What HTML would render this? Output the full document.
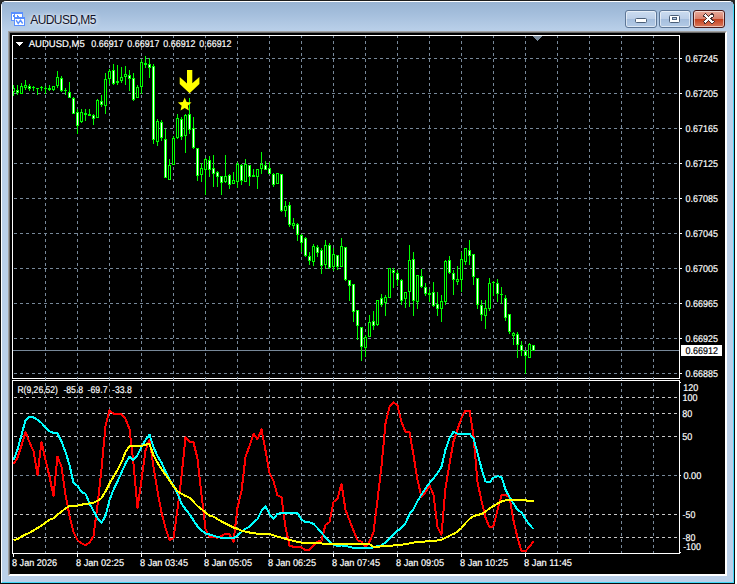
<!DOCTYPE html>
<html><head><meta charset="utf-8"><title>AUDUSD,M5</title>
<style>
html,body{margin:0;padding:0;background:#fff;}
body{width:737px;height:584px;overflow:hidden;position:relative;font-family:'Liberation Sans', sans-serif;}
#win{position:absolute;left:0;top:0;width:735px;height:584px;box-sizing:border-box;background:#bad0e9;border:1px solid #0c0c0c;border-top-color:#1c1c1c;border-radius:6px 6px 0 0;overflow:hidden;}
#hl{position:absolute;left:0;top:0;right:0;bottom:0;border:1px solid #fff;border-right-color:#40d8f8;border-bottom-color:#40d8f8;border-radius:5px 5px 0 0;}
#cap{position:absolute;left:1px;top:1px;right:1px;height:29px;background:linear-gradient(#99b4d3,#a4bedc 40%,#bad0e9);}
#title{position:absolute;left:29.2px;top:11px;font-size:12px;line-height:16px;color:#12122a;white-space:nowrap;text-shadow:0 0 6px #fff,0 0 3px rgba(255,255,255,.8);letter-spacing:-0.55px;}
.btn{position:absolute;top:9px;height:18px;width:32px;box-sizing:border-box;border:1px solid #5d7696;border-radius:3px;box-shadow:inset 0 0 0 1px rgba(255,255,255,.55);background:linear-gradient(#cbdcf0 0,#bccfe8 48%,#a5bedd 52%,#b4cbe6 100%);}
#bclose{border-color:#4a1a1a;background:linear-gradient(#e8ab9c 0,#d9816c 48%,#c4401f 52%,#d87a5e 100%);}
#client{position:absolute;left:7px;top:30px;width:719px;height:545px;box-sizing:border-box;background:#000;border-left:1px solid #a0a0a0;border-top:1px solid #a0a0a0;border-right:1px solid #fff;border-bottom:1px solid #fff;}
#client2{position:absolute;left:0;top:0;right:0;bottom:0;border-left:1px solid #696969;border-top:1px solid #696969;border-right:1px solid #fff;border-bottom:1px solid #fff;}
svg{position:absolute;left:0;top:0;}
svg rect,svg line,svg polygon,svg polyline{shape-rendering:crispEdges;}
svg text{font-family:'Liberation Sans', sans-serif;text-rendering:geometricPrecision;}
</style></head><body>
<div style="position:absolute;left:0;top:0;width:735px;height:12px;background:#2a2a2a"></div>
<div id="win"><div id="hl"></div><div id="cap"></div>
<div id="title">AUDUSD,M5</div>
<div class="btn" style="left:624px"></div>
<div class="btn" style="left:658px"></div>
<div class="btn" id="bclose" style="left:692px;width:32px"></div>
<div id="client"><div id="client2"></div></div>
</div>
<svg width="737" height="584" viewBox="0 0 737 584">
<!-- icon -->
<g shape-rendering="crispEdges">
<rect x="11.5" y="12.5" width="11" height="8" fill="#fff" stroke="#5a90ff"/>
<rect x="11" y="12" width="12" height="2" fill="#5a90ff"/>
</g>
<g fill="none" stroke="#5a90ff" stroke-width="1.5" style="shape-rendering:auto">
<polyline points="13,16.3 14.2,15.4 14.8,16.6"/>
<polyline points="17,15.2 18.8,17"/>
</g>
<g shape-rendering="crispEdges">
<rect x="14.5" y="17.5" width="10" height="8" fill="#fff" stroke="#5a90ff"/>
<rect x="14" y="17" width="11" height="2" fill="#5a90ff"/>
</g>
<polyline points="16.1,20.1 18.2,23.5 20.5,20.3 22.7,23.5" fill="none" stroke="#5a90ff" stroke-width="1.4" style="shape-rendering:auto"/>
<!-- caption glyphs -->
<rect x="635.5" y="18.5" width="11" height="4" rx="1" fill="#fff" stroke="#4b5f78" style="shape-rendering:auto"/>
<rect x="669.5" y="15.5" width="10" height="7" rx="1" fill="#fff" stroke="#4b5f78" style="shape-rendering:auto"/>
<rect x="672.5" y="17.5" width="4" height="2" fill="#b4cbe6" stroke="#4b5f78" style="shape-rendering:auto"/>
<g style="shape-rendering:auto" fill="none" stroke-linecap="square">
<line x1="705.3" y1="15.6" x2="712" y2="21.6" stroke="#4a3030" stroke-width="3.8"/>
<line x1="712" y1="15.6" x2="705.3" y2="21.6" stroke="#4a3030" stroke-width="3.8"/>
<line x1="705.3" y1="15.6" x2="712" y2="21.6" stroke="#fff" stroke-width="2.2"/>
<line x1="712" y1="15.6" x2="705.3" y2="21.6" stroke="#fff" stroke-width="2.2"/>
</g>
<defs><clipPath id="c0"><rect x="13" y="36" width="666" height="342"/></clipPath><clipPath id="c2"><rect x="13" y="36" width="666" height="517"/></clipPath><clipPath id="c1"><rect x="13" y="381" width="666" height="172"/></clipPath></defs>
<rect x="12" y="35" width="668" height="1" fill="#fff"/>
<rect x="12" y="35" width="1" height="344" fill="#fff"/>
<rect x="679" y="35" width="1" height="344" fill="#fff"/>
<rect x="12" y="378" width="668" height="1" fill="#fff"/>
<rect x="12" y="380" width="668" height="1" fill="#fff"/>
<rect x="12" y="380" width="1" height="174" fill="#fff"/>
<rect x="679" y="380" width="1" height="174" fill="#fff"/>
<rect x="12" y="553" width="668" height="1" fill="#fff"/>
<line x1="8" y1="58.5" x2="679" y2="58.5" stroke="#778899" stroke-width="1" stroke-dasharray="3 3" clip-path="url(#c0)"/>
<line x1="8" y1="93.5" x2="679" y2="93.5" stroke="#778899" stroke-width="1" stroke-dasharray="3 3" clip-path="url(#c0)"/>
<line x1="8" y1="128.5" x2="679" y2="128.5" stroke="#778899" stroke-width="1" stroke-dasharray="3 3" clip-path="url(#c0)"/>
<line x1="8" y1="163.5" x2="679" y2="163.5" stroke="#778899" stroke-width="1" stroke-dasharray="3 3" clip-path="url(#c0)"/>
<line x1="8" y1="198.5" x2="679" y2="198.5" stroke="#778899" stroke-width="1" stroke-dasharray="3 3" clip-path="url(#c0)"/>
<line x1="8" y1="233.5" x2="679" y2="233.5" stroke="#778899" stroke-width="1" stroke-dasharray="3 3" clip-path="url(#c0)"/>
<line x1="8" y1="268.5" x2="679" y2="268.5" stroke="#778899" stroke-width="1" stroke-dasharray="3 3" clip-path="url(#c0)"/>
<line x1="8" y1="303.5" x2="679" y2="303.5" stroke="#778899" stroke-width="1" stroke-dasharray="3 3" clip-path="url(#c0)"/>
<line x1="8" y1="338.5" x2="679" y2="338.5" stroke="#778899" stroke-width="1" stroke-dasharray="3 3" clip-path="url(#c0)"/>
<line x1="8" y1="373.5" x2="679" y2="373.5" stroke="#778899" stroke-width="1" stroke-dasharray="3 3" clip-path="url(#c0)"/>
<line x1="45.5" y1="35" x2="45.5" y2="553" stroke="#778899" stroke-width="1" stroke-dasharray="3 3" clip-path="url(#c2)"/>
<line x1="77.5" y1="35" x2="77.5" y2="553" stroke="#778899" stroke-width="1" stroke-dasharray="3 3" clip-path="url(#c2)"/>
<line x1="109.5" y1="35" x2="109.5" y2="553" stroke="#778899" stroke-width="1" stroke-dasharray="3 3" clip-path="url(#c2)"/>
<line x1="141.5" y1="35" x2="141.5" y2="553" stroke="#778899" stroke-width="1" stroke-dasharray="3 3" clip-path="url(#c2)"/>
<line x1="173.5" y1="35" x2="173.5" y2="553" stroke="#778899" stroke-width="1" stroke-dasharray="3 3" clip-path="url(#c2)"/>
<line x1="205.5" y1="35" x2="205.5" y2="553" stroke="#778899" stroke-width="1" stroke-dasharray="3 3" clip-path="url(#c2)"/>
<line x1="237.5" y1="35" x2="237.5" y2="553" stroke="#778899" stroke-width="1" stroke-dasharray="3 3" clip-path="url(#c2)"/>
<line x1="269.5" y1="35" x2="269.5" y2="553" stroke="#778899" stroke-width="1" stroke-dasharray="3 3" clip-path="url(#c2)"/>
<line x1="301.5" y1="35" x2="301.5" y2="553" stroke="#778899" stroke-width="1" stroke-dasharray="3 3" clip-path="url(#c2)"/>
<line x1="333.5" y1="35" x2="333.5" y2="553" stroke="#778899" stroke-width="1" stroke-dasharray="3 3" clip-path="url(#c2)"/>
<line x1="365.5" y1="35" x2="365.5" y2="553" stroke="#778899" stroke-width="1" stroke-dasharray="3 3" clip-path="url(#c2)"/>
<line x1="397.5" y1="35" x2="397.5" y2="553" stroke="#778899" stroke-width="1" stroke-dasharray="3 3" clip-path="url(#c2)"/>
<line x1="429.5" y1="35" x2="429.5" y2="553" stroke="#778899" stroke-width="1" stroke-dasharray="3 3" clip-path="url(#c2)"/>
<line x1="461.5" y1="35" x2="461.5" y2="553" stroke="#778899" stroke-width="1" stroke-dasharray="3 3" clip-path="url(#c2)"/>
<line x1="493.5" y1="35" x2="493.5" y2="553" stroke="#778899" stroke-width="1" stroke-dasharray="3 3" clip-path="url(#c2)"/>
<line x1="525.5" y1="35" x2="525.5" y2="553" stroke="#778899" stroke-width="1" stroke-dasharray="3 3" clip-path="url(#c2)"/>
<line x1="557.5" y1="35" x2="557.5" y2="553" stroke="#778899" stroke-width="1" stroke-dasharray="3 3" clip-path="url(#c2)"/>
<line x1="589.5" y1="35" x2="589.5" y2="553" stroke="#778899" stroke-width="1" stroke-dasharray="3 3" clip-path="url(#c2)"/>
<line x1="621.5" y1="35" x2="621.5" y2="553" stroke="#778899" stroke-width="1" stroke-dasharray="3 3" clip-path="url(#c2)"/>
<line x1="653.5" y1="35" x2="653.5" y2="553" stroke="#778899" stroke-width="1" stroke-dasharray="3 3" clip-path="url(#c2)"/>
<line x1="8" y1="397.5" x2="679" y2="397.5" stroke="#c8c8c8" stroke-width="1" stroke-dasharray="3 3" clip-path="url(#c1)"/>
<line x1="8" y1="413.5" x2="679" y2="413.5" stroke="#c8c8c8" stroke-width="1" stroke-dasharray="3 3" clip-path="url(#c1)"/>
<line x1="8" y1="436.5" x2="679" y2="436.5" stroke="#c8c8c8" stroke-width="1" stroke-dasharray="3 3" clip-path="url(#c1)"/>
<line x1="8" y1="514.5" x2="679" y2="514.5" stroke="#c8c8c8" stroke-width="1" stroke-dasharray="3 3" clip-path="url(#c1)"/>
<line x1="8" y1="537.5" x2="679" y2="537.5" stroke="#c8c8c8" stroke-width="1" stroke-dasharray="3 3" clip-path="url(#c1)"/>
<line x1="8" y1="475.5" x2="679" y2="475.5" stroke="#778899" stroke-width="1" stroke-dasharray="3 3" clip-path="url(#c1)"/>
<rect x="533" y="36" width="9" height="1" fill="#778899"/>
<rect x="534" y="37" width="7" height="1" fill="#778899"/>
<rect x="535" y="38" width="5" height="1" fill="#778899"/>
<rect x="536" y="39" width="3" height="1" fill="#778899"/>
<rect x="537" y="40" width="1" height="1" fill="#778899"/>
<rect x="13" y="350" width="666" height="1" fill="#778899"/>
<rect x="13" y="85" width="1" height="11" fill="#00ff00"/>
<rect x="13" y="88" width="2" height="4" fill="#00ff00"/>
<rect x="13" y="89" width="1" height="2" fill="#000"/>
<rect x="17" y="85" width="1" height="10" fill="#00ff00"/>
<rect x="16" y="90" width="3" height="3" fill="#00ff00"/>
<rect x="17" y="91" width="1" height="1" fill="#fff"/>
<rect x="21" y="83" width="1" height="11" fill="#00ff00"/>
<rect x="20" y="86" width="3" height="8" fill="#00ff00"/>
<rect x="21" y="87" width="1" height="6" fill="#000"/>
<rect x="25" y="80" width="1" height="10" fill="#00ff00"/>
<rect x="24" y="85" width="3" height="3" fill="#00ff00"/>
<rect x="25" y="86" width="1" height="1" fill="#000"/>
<rect x="29" y="84" width="1" height="7" fill="#00ff00"/>
<rect x="28" y="86" width="3" height="3" fill="#00ff00"/>
<rect x="29" y="87" width="1" height="1" fill="#fff"/>
<rect x="33" y="86" width="1" height="5" fill="#00ff00"/>
<rect x="32" y="87" width="3" height="1" fill="#00ff00"/>
<rect x="37" y="88" width="1" height="7" fill="#00ff00"/>
<rect x="36" y="88" width="3" height="1" fill="#00ff00"/>
<rect x="41" y="86" width="1" height="5" fill="#00ff00"/>
<rect x="40" y="87" width="3" height="1" fill="#00ff00"/>
<rect x="45" y="86" width="1" height="8" fill="#00ff00"/>
<rect x="44" y="88" width="3" height="1" fill="#00ff00"/>
<rect x="49" y="85" width="1" height="6" fill="#00ff00"/>
<rect x="48" y="88" width="3" height="2" fill="#00ff00"/>
<rect x="53" y="86" width="1" height="5" fill="#00ff00"/>
<rect x="52" y="86" width="3" height="4" fill="#00ff00"/>
<rect x="53" y="87" width="1" height="2" fill="#000"/>
<rect x="57" y="71" width="1" height="17" fill="#00ff00"/>
<rect x="56" y="77" width="3" height="9" fill="#00ff00"/>
<rect x="57" y="78" width="1" height="7" fill="#000"/>
<rect x="61" y="76" width="1" height="16" fill="#00ff00"/>
<rect x="60" y="78" width="3" height="13" fill="#00ff00"/>
<rect x="61" y="79" width="1" height="11" fill="#fff"/>
<rect x="65" y="88" width="1" height="7" fill="#00ff00"/>
<rect x="64" y="90" width="3" height="1" fill="#00ff00"/>
<rect x="69" y="82" width="1" height="16" fill="#00ff00"/>
<rect x="68" y="92" width="3" height="6" fill="#00ff00"/>
<rect x="69" y="93" width="1" height="4" fill="#fff"/>
<rect x="73" y="97" width="1" height="17" fill="#00ff00"/>
<rect x="72" y="98" width="3" height="16" fill="#00ff00"/>
<rect x="73" y="99" width="1" height="14" fill="#fff"/>
<rect x="77" y="109" width="1" height="25" fill="#00ff00"/>
<rect x="76" y="112" width="3" height="14" fill="#00ff00"/>
<rect x="77" y="113" width="1" height="12" fill="#fff"/>
<rect x="81" y="109" width="1" height="14" fill="#00ff00"/>
<rect x="80" y="112" width="3" height="10" fill="#00ff00"/>
<rect x="81" y="113" width="1" height="8" fill="#000"/>
<rect x="85" y="109" width="1" height="12" fill="#00ff00"/>
<rect x="84" y="113" width="3" height="2" fill="#00ff00"/>
<rect x="89" y="109" width="1" height="7" fill="#00ff00"/>
<rect x="88" y="114" width="3" height="2" fill="#00ff00"/>
<rect x="93" y="114" width="1" height="11" fill="#00ff00"/>
<rect x="92" y="115" width="3" height="4" fill="#00ff00"/>
<rect x="93" y="116" width="1" height="2" fill="#fff"/>
<rect x="97" y="99" width="1" height="19" fill="#00ff00"/>
<rect x="96" y="100" width="3" height="18" fill="#00ff00"/>
<rect x="97" y="101" width="1" height="16" fill="#000"/>
<rect x="101" y="95" width="1" height="12" fill="#00ff00"/>
<rect x="100" y="101" width="3" height="4" fill="#00ff00"/>
<rect x="101" y="102" width="1" height="2" fill="#fff"/>
<rect x="105" y="73" width="1" height="41" fill="#00ff00"/>
<rect x="104" y="79" width="3" height="27" fill="#00ff00"/>
<rect x="105" y="80" width="1" height="25" fill="#000"/>
<rect x="109" y="69" width="1" height="15" fill="#00ff00"/>
<rect x="108" y="71" width="3" height="8" fill="#00ff00"/>
<rect x="109" y="72" width="1" height="6" fill="#000"/>
<rect x="113" y="64" width="1" height="21" fill="#00ff00"/>
<rect x="112" y="70" width="3" height="14" fill="#00ff00"/>
<rect x="113" y="71" width="1" height="12" fill="#fff"/>
<rect x="117" y="65" width="1" height="20" fill="#00ff00"/>
<rect x="116" y="81" width="3" height="2" fill="#00ff00"/>
<rect x="121" y="67" width="1" height="16" fill="#00ff00"/>
<rect x="120" y="77" width="3" height="4" fill="#00ff00"/>
<rect x="121" y="78" width="1" height="2" fill="#000"/>
<rect x="125" y="66" width="1" height="19" fill="#00ff00"/>
<rect x="124" y="74" width="3" height="3" fill="#00ff00"/>
<rect x="125" y="75" width="1" height="1" fill="#000"/>
<rect x="129" y="70" width="1" height="21" fill="#00ff00"/>
<rect x="128" y="75" width="3" height="4" fill="#00ff00"/>
<rect x="129" y="76" width="1" height="2" fill="#fff"/>
<rect x="133" y="73" width="1" height="28" fill="#00ff00"/>
<rect x="132" y="78" width="3" height="22" fill="#00ff00"/>
<rect x="133" y="79" width="1" height="20" fill="#fff"/>
<rect x="137" y="85" width="1" height="13" fill="#00ff00"/>
<rect x="136" y="87" width="3" height="11" fill="#00ff00"/>
<rect x="137" y="88" width="1" height="9" fill="#000"/>
<rect x="141" y="59" width="1" height="35" fill="#00ff00"/>
<rect x="140" y="62" width="3" height="25" fill="#00ff00"/>
<rect x="141" y="63" width="1" height="23" fill="#000"/>
<rect x="145" y="56" width="1" height="12" fill="#00ff00"/>
<rect x="144" y="63" width="3" height="2" fill="#00ff00"/>
<rect x="149" y="58" width="1" height="20" fill="#00ff00"/>
<rect x="148" y="64" width="3" height="4" fill="#00ff00"/>
<rect x="149" y="65" width="1" height="2" fill="#fff"/>
<rect x="153" y="64" width="1" height="80" fill="#00ff00"/>
<rect x="152" y="66" width="3" height="74" fill="#00ff00"/>
<rect x="153" y="67" width="1" height="72" fill="#fff"/>
<rect x="157" y="119" width="1" height="27" fill="#00ff00"/>
<rect x="156" y="121" width="3" height="21" fill="#00ff00"/>
<rect x="157" y="122" width="1" height="19" fill="#000"/>
<rect x="161" y="120" width="1" height="21" fill="#00ff00"/>
<rect x="160" y="122" width="3" height="16" fill="#00ff00"/>
<rect x="161" y="123" width="1" height="14" fill="#fff"/>
<rect x="165" y="129" width="1" height="49" fill="#00ff00"/>
<rect x="164" y="139" width="3" height="39" fill="#00ff00"/>
<rect x="165" y="140" width="1" height="37" fill="#fff"/>
<rect x="169" y="159" width="1" height="21" fill="#00ff00"/>
<rect x="168" y="165" width="3" height="15" fill="#00ff00"/>
<rect x="169" y="166" width="1" height="13" fill="#000"/>
<rect x="173" y="136" width="1" height="29" fill="#00ff00"/>
<rect x="172" y="138" width="3" height="27" fill="#00ff00"/>
<rect x="173" y="139" width="1" height="25" fill="#000"/>
<rect x="177" y="114" width="1" height="25" fill="#00ff00"/>
<rect x="176" y="118" width="3" height="20" fill="#00ff00"/>
<rect x="177" y="119" width="1" height="18" fill="#000"/>
<rect x="181" y="117" width="1" height="23" fill="#00ff00"/>
<rect x="180" y="119" width="3" height="18" fill="#00ff00"/>
<rect x="181" y="120" width="1" height="16" fill="#fff"/>
<rect x="185" y="114" width="1" height="39" fill="#00ff00"/>
<rect x="184" y="115" width="3" height="21" fill="#00ff00"/>
<rect x="185" y="116" width="1" height="19" fill="#000"/>
<rect x="189" y="98" width="1" height="36" fill="#00ff00"/>
<rect x="188" y="114" width="3" height="16" fill="#00ff00"/>
<rect x="189" y="115" width="1" height="14" fill="#fff"/>
<rect x="193" y="117" width="1" height="32" fill="#00ff00"/>
<rect x="192" y="128" width="3" height="20" fill="#00ff00"/>
<rect x="193" y="129" width="1" height="18" fill="#fff"/>
<rect x="197" y="148" width="1" height="33" fill="#00ff00"/>
<rect x="196" y="148" width="3" height="28" fill="#00ff00"/>
<rect x="197" y="149" width="1" height="26" fill="#fff"/>
<rect x="201" y="163" width="1" height="19" fill="#00ff00"/>
<rect x="200" y="168" width="3" height="7" fill="#00ff00"/>
<rect x="201" y="169" width="1" height="5" fill="#000"/>
<rect x="205" y="158" width="1" height="37" fill="#00ff00"/>
<rect x="204" y="159" width="3" height="11" fill="#00ff00"/>
<rect x="205" y="160" width="1" height="9" fill="#000"/>
<rect x="209" y="156" width="1" height="21" fill="#00ff00"/>
<rect x="208" y="160" width="3" height="10" fill="#00ff00"/>
<rect x="209" y="161" width="1" height="8" fill="#fff"/>
<rect x="213" y="155" width="1" height="32" fill="#00ff00"/>
<rect x="212" y="168" width="3" height="6" fill="#00ff00"/>
<rect x="213" y="169" width="1" height="4" fill="#fff"/>
<rect x="217" y="171" width="1" height="16" fill="#00ff00"/>
<rect x="216" y="172" width="3" height="5" fill="#00ff00"/>
<rect x="217" y="173" width="1" height="3" fill="#fff"/>
<rect x="221" y="176" width="1" height="19" fill="#00ff00"/>
<rect x="220" y="176" width="3" height="7" fill="#00ff00"/>
<rect x="221" y="177" width="1" height="5" fill="#fff"/>
<rect x="225" y="155" width="1" height="28" fill="#00ff00"/>
<rect x="224" y="176" width="3" height="6" fill="#00ff00"/>
<rect x="225" y="177" width="1" height="4" fill="#000"/>
<rect x="229" y="174" width="1" height="15" fill="#00ff00"/>
<rect x="228" y="175" width="3" height="10" fill="#00ff00"/>
<rect x="229" y="176" width="1" height="8" fill="#fff"/>
<rect x="233" y="172" width="1" height="12" fill="#00ff00"/>
<rect x="232" y="180" width="3" height="4" fill="#00ff00"/>
<rect x="233" y="181" width="1" height="2" fill="#000"/>
<rect x="237" y="162" width="1" height="26" fill="#00ff00"/>
<rect x="236" y="164" width="3" height="18" fill="#00ff00"/>
<rect x="237" y="165" width="1" height="16" fill="#000"/>
<rect x="241" y="164" width="1" height="21" fill="#00ff00"/>
<rect x="240" y="165" width="3" height="16" fill="#00ff00"/>
<rect x="241" y="166" width="1" height="14" fill="#fff"/>
<rect x="245" y="159" width="1" height="23" fill="#00ff00"/>
<rect x="244" y="164" width="3" height="18" fill="#00ff00"/>
<rect x="245" y="165" width="1" height="16" fill="#000"/>
<rect x="249" y="165" width="1" height="21" fill="#00ff00"/>
<rect x="248" y="165" width="3" height="12" fill="#00ff00"/>
<rect x="249" y="166" width="1" height="10" fill="#fff"/>
<rect x="253" y="169" width="1" height="8" fill="#00ff00"/>
<rect x="252" y="175" width="3" height="2" fill="#00ff00"/>
<rect x="257" y="169" width="1" height="20" fill="#00ff00"/>
<rect x="256" y="169" width="3" height="8" fill="#00ff00"/>
<rect x="257" y="170" width="1" height="6" fill="#000"/>
<rect x="261" y="152" width="1" height="22" fill="#00ff00"/>
<rect x="260" y="164" width="3" height="5" fill="#00ff00"/>
<rect x="261" y="165" width="1" height="3" fill="#000"/>
<rect x="265" y="161" width="1" height="9" fill="#00ff00"/>
<rect x="264" y="165" width="3" height="5" fill="#00ff00"/>
<rect x="265" y="166" width="1" height="3" fill="#fff"/>
<rect x="269" y="162" width="1" height="12" fill="#00ff00"/>
<rect x="268" y="168" width="3" height="6" fill="#00ff00"/>
<rect x="269" y="169" width="1" height="4" fill="#fff"/>
<rect x="273" y="173" width="1" height="14" fill="#00ff00"/>
<rect x="272" y="174" width="3" height="11" fill="#00ff00"/>
<rect x="273" y="175" width="1" height="9" fill="#fff"/>
<rect x="277" y="173" width="1" height="11" fill="#00ff00"/>
<rect x="276" y="173" width="3" height="11" fill="#00ff00"/>
<rect x="277" y="174" width="1" height="9" fill="#000"/>
<rect x="281" y="174" width="1" height="38" fill="#00ff00"/>
<rect x="280" y="174" width="3" height="37" fill="#00ff00"/>
<rect x="281" y="175" width="1" height="35" fill="#fff"/>
<rect x="285" y="201" width="1" height="16" fill="#00ff00"/>
<rect x="284" y="206" width="3" height="5" fill="#00ff00"/>
<rect x="285" y="207" width="1" height="3" fill="#000"/>
<rect x="289" y="202" width="1" height="25" fill="#00ff00"/>
<rect x="288" y="205" width="3" height="20" fill="#00ff00"/>
<rect x="289" y="206" width="1" height="18" fill="#fff"/>
<rect x="293" y="218" width="1" height="11" fill="#00ff00"/>
<rect x="292" y="223" width="3" height="3" fill="#00ff00"/>
<rect x="293" y="224" width="1" height="1" fill="#000"/>
<rect x="297" y="223" width="1" height="18" fill="#00ff00"/>
<rect x="296" y="224" width="3" height="11" fill="#00ff00"/>
<rect x="297" y="225" width="1" height="9" fill="#fff"/>
<rect x="301" y="234" width="1" height="18" fill="#00ff00"/>
<rect x="300" y="235" width="3" height="8" fill="#00ff00"/>
<rect x="301" y="236" width="1" height="6" fill="#fff"/>
<rect x="305" y="237" width="1" height="20" fill="#00ff00"/>
<rect x="304" y="238" width="3" height="18" fill="#00ff00"/>
<rect x="305" y="239" width="1" height="16" fill="#fff"/>
<rect x="309" y="252" width="1" height="13" fill="#00ff00"/>
<rect x="308" y="256" width="3" height="5" fill="#00ff00"/>
<rect x="309" y="257" width="1" height="3" fill="#fff"/>
<rect x="313" y="244" width="1" height="22" fill="#00ff00"/>
<rect x="312" y="246" width="3" height="16" fill="#00ff00"/>
<rect x="313" y="247" width="1" height="14" fill="#000"/>
<rect x="317" y="245" width="1" height="12" fill="#00ff00"/>
<rect x="316" y="247" width="3" height="6" fill="#00ff00"/>
<rect x="317" y="248" width="1" height="4" fill="#fff"/>
<rect x="321" y="248" width="1" height="26" fill="#00ff00"/>
<rect x="320" y="250" width="3" height="16" fill="#00ff00"/>
<rect x="321" y="251" width="1" height="14" fill="#fff"/>
<rect x="325" y="240" width="1" height="29" fill="#00ff00"/>
<rect x="324" y="245" width="3" height="20" fill="#00ff00"/>
<rect x="325" y="246" width="1" height="18" fill="#000"/>
<rect x="329" y="243" width="1" height="26" fill="#00ff00"/>
<rect x="328" y="245" width="3" height="23" fill="#00ff00"/>
<rect x="329" y="246" width="1" height="21" fill="#fff"/>
<rect x="333" y="248" width="1" height="23" fill="#00ff00"/>
<rect x="332" y="254" width="3" height="13" fill="#00ff00"/>
<rect x="333" y="255" width="1" height="11" fill="#000"/>
<rect x="337" y="255" width="1" height="15" fill="#00ff00"/>
<rect x="336" y="255" width="3" height="12" fill="#00ff00"/>
<rect x="337" y="256" width="1" height="10" fill="#fff"/>
<rect x="341" y="238" width="1" height="29" fill="#00ff00"/>
<rect x="340" y="246" width="3" height="21" fill="#00ff00"/>
<rect x="341" y="247" width="1" height="19" fill="#000"/>
<rect x="345" y="247" width="1" height="34" fill="#00ff00"/>
<rect x="344" y="247" width="3" height="33" fill="#00ff00"/>
<rect x="345" y="248" width="1" height="31" fill="#fff"/>
<rect x="349" y="280" width="1" height="21" fill="#00ff00"/>
<rect x="348" y="280" width="3" height="6" fill="#00ff00"/>
<rect x="349" y="281" width="1" height="4" fill="#fff"/>
<rect x="353" y="284" width="1" height="38" fill="#00ff00"/>
<rect x="352" y="284" width="3" height="28" fill="#00ff00"/>
<rect x="353" y="285" width="1" height="26" fill="#fff"/>
<rect x="357" y="310" width="1" height="30" fill="#00ff00"/>
<rect x="356" y="310" width="3" height="16" fill="#00ff00"/>
<rect x="357" y="311" width="1" height="14" fill="#fff"/>
<rect x="361" y="327" width="1" height="34" fill="#00ff00"/>
<rect x="360" y="327" width="3" height="20" fill="#00ff00"/>
<rect x="361" y="328" width="1" height="18" fill="#fff"/>
<rect x="365" y="335" width="1" height="22" fill="#00ff00"/>
<rect x="364" y="337" width="3" height="11" fill="#00ff00"/>
<rect x="365" y="338" width="1" height="9" fill="#000"/>
<rect x="369" y="315" width="1" height="22" fill="#00ff00"/>
<rect x="368" y="322" width="3" height="15" fill="#00ff00"/>
<rect x="369" y="323" width="1" height="13" fill="#000"/>
<rect x="373" y="311" width="1" height="19" fill="#00ff00"/>
<rect x="372" y="321" width="3" height="5" fill="#00ff00"/>
<rect x="373" y="322" width="1" height="3" fill="#fff"/>
<rect x="377" y="300" width="1" height="26" fill="#00ff00"/>
<rect x="376" y="300" width="3" height="25" fill="#00ff00"/>
<rect x="377" y="301" width="1" height="23" fill="#000"/>
<rect x="381" y="294" width="1" height="13" fill="#00ff00"/>
<rect x="380" y="298" width="3" height="7" fill="#00ff00"/>
<rect x="381" y="299" width="1" height="5" fill="#fff"/>
<rect x="385" y="295" width="1" height="21" fill="#00ff00"/>
<rect x="384" y="297" width="3" height="6" fill="#00ff00"/>
<rect x="385" y="298" width="1" height="4" fill="#000"/>
<rect x="389" y="268" width="1" height="30" fill="#00ff00"/>
<rect x="388" y="268" width="3" height="30" fill="#00ff00"/>
<rect x="389" y="269" width="1" height="28" fill="#000"/>
<rect x="393" y="268" width="1" height="20" fill="#00ff00"/>
<rect x="392" y="270" width="3" height="3" fill="#00ff00"/>
<rect x="393" y="271" width="1" height="1" fill="#fff"/>
<rect x="397" y="270" width="1" height="16" fill="#00ff00"/>
<rect x="396" y="273" width="3" height="7" fill="#00ff00"/>
<rect x="397" y="274" width="1" height="5" fill="#fff"/>
<rect x="401" y="279" width="1" height="26" fill="#00ff00"/>
<rect x="400" y="280" width="3" height="21" fill="#00ff00"/>
<rect x="401" y="281" width="1" height="19" fill="#fff"/>
<rect x="405" y="292" width="1" height="16" fill="#00ff00"/>
<rect x="404" y="292" width="3" height="7" fill="#00ff00"/>
<rect x="405" y="293" width="1" height="5" fill="#000"/>
<rect x="409" y="245" width="1" height="62" fill="#00ff00"/>
<rect x="408" y="260" width="3" height="32" fill="#00ff00"/>
<rect x="409" y="261" width="1" height="30" fill="#000"/>
<rect x="413" y="252" width="1" height="64" fill="#00ff00"/>
<rect x="412" y="259" width="3" height="42" fill="#00ff00"/>
<rect x="413" y="260" width="1" height="40" fill="#fff"/>
<rect x="417" y="275" width="1" height="34" fill="#00ff00"/>
<rect x="416" y="275" width="3" height="27" fill="#00ff00"/>
<rect x="417" y="276" width="1" height="25" fill="#000"/>
<rect x="421" y="269" width="1" height="19" fill="#00ff00"/>
<rect x="420" y="276" width="3" height="11" fill="#00ff00"/>
<rect x="421" y="277" width="1" height="9" fill="#fff"/>
<rect x="425" y="283" width="1" height="13" fill="#00ff00"/>
<rect x="424" y="287" width="3" height="7" fill="#00ff00"/>
<rect x="425" y="288" width="1" height="5" fill="#fff"/>
<rect x="429" y="289" width="1" height="13" fill="#00ff00"/>
<rect x="428" y="293" width="3" height="2" fill="#00ff00"/>
<rect x="433" y="282" width="1" height="25" fill="#00ff00"/>
<rect x="432" y="292" width="3" height="14" fill="#00ff00"/>
<rect x="433" y="293" width="1" height="12" fill="#fff"/>
<rect x="437" y="292" width="1" height="24" fill="#00ff00"/>
<rect x="436" y="304" width="3" height="5" fill="#00ff00"/>
<rect x="437" y="305" width="1" height="3" fill="#fff"/>
<rect x="441" y="295" width="1" height="27" fill="#00ff00"/>
<rect x="440" y="301" width="3" height="8" fill="#00ff00"/>
<rect x="441" y="302" width="1" height="6" fill="#000"/>
<rect x="445" y="260" width="1" height="45" fill="#00ff00"/>
<rect x="444" y="261" width="3" height="41" fill="#00ff00"/>
<rect x="445" y="262" width="1" height="39" fill="#000"/>
<rect x="449" y="256" width="1" height="18" fill="#00ff00"/>
<rect x="448" y="260" width="3" height="13" fill="#00ff00"/>
<rect x="449" y="261" width="1" height="11" fill="#fff"/>
<rect x="453" y="270" width="1" height="25" fill="#00ff00"/>
<rect x="452" y="273" width="3" height="7" fill="#00ff00"/>
<rect x="453" y="274" width="1" height="5" fill="#fff"/>
<rect x="457" y="266" width="1" height="19" fill="#00ff00"/>
<rect x="456" y="279" width="3" height="3" fill="#00ff00"/>
<rect x="457" y="280" width="1" height="1" fill="#000"/>
<rect x="461" y="252" width="1" height="40" fill="#00ff00"/>
<rect x="460" y="259" width="3" height="21" fill="#00ff00"/>
<rect x="461" y="260" width="1" height="19" fill="#000"/>
<rect x="465" y="248" width="1" height="17" fill="#00ff00"/>
<rect x="464" y="248" width="3" height="14" fill="#00ff00"/>
<rect x="465" y="249" width="1" height="12" fill="#000"/>
<rect x="469" y="240" width="1" height="25" fill="#00ff00"/>
<rect x="468" y="250" width="3" height="6" fill="#00ff00"/>
<rect x="469" y="251" width="1" height="4" fill="#fff"/>
<rect x="473" y="254" width="1" height="31" fill="#00ff00"/>
<rect x="472" y="254" width="3" height="23" fill="#00ff00"/>
<rect x="473" y="255" width="1" height="21" fill="#fff"/>
<rect x="477" y="278" width="1" height="31" fill="#00ff00"/>
<rect x="476" y="278" width="3" height="27" fill="#00ff00"/>
<rect x="477" y="279" width="1" height="25" fill="#fff"/>
<rect x="481" y="300" width="1" height="21" fill="#00ff00"/>
<rect x="480" y="305" width="3" height="10" fill="#00ff00"/>
<rect x="481" y="306" width="1" height="8" fill="#fff"/>
<rect x="485" y="300" width="1" height="29" fill="#00ff00"/>
<rect x="484" y="308" width="3" height="8" fill="#00ff00"/>
<rect x="485" y="309" width="1" height="6" fill="#000"/>
<rect x="489" y="278" width="1" height="33" fill="#00ff00"/>
<rect x="488" y="283" width="3" height="26" fill="#00ff00"/>
<rect x="489" y="284" width="1" height="24" fill="#000"/>
<rect x="493" y="281" width="1" height="15" fill="#00ff00"/>
<rect x="492" y="282" width="3" height="1" fill="#00ff00"/>
<rect x="497" y="279" width="1" height="23" fill="#00ff00"/>
<rect x="496" y="283" width="3" height="11" fill="#00ff00"/>
<rect x="497" y="284" width="1" height="9" fill="#fff"/>
<rect x="501" y="287" width="1" height="17" fill="#00ff00"/>
<rect x="500" y="294" width="3" height="1" fill="#00ff00"/>
<rect x="505" y="295" width="1" height="26" fill="#00ff00"/>
<rect x="504" y="298" width="3" height="20" fill="#00ff00"/>
<rect x="505" y="299" width="1" height="18" fill="#fff"/>
<rect x="509" y="314" width="1" height="20" fill="#00ff00"/>
<rect x="508" y="314" width="3" height="18" fill="#00ff00"/>
<rect x="509" y="315" width="1" height="16" fill="#fff"/>
<rect x="513" y="332" width="1" height="13" fill="#00ff00"/>
<rect x="512" y="333" width="3" height="3" fill="#00ff00"/>
<rect x="513" y="334" width="1" height="1" fill="#000"/>
<rect x="517" y="332" width="1" height="26" fill="#00ff00"/>
<rect x="516" y="334" width="3" height="11" fill="#00ff00"/>
<rect x="517" y="335" width="1" height="9" fill="#fff"/>
<rect x="521" y="341" width="1" height="15" fill="#00ff00"/>
<rect x="520" y="345" width="3" height="6" fill="#00ff00"/>
<rect x="521" y="346" width="1" height="4" fill="#fff"/>
<rect x="525" y="350" width="1" height="24" fill="#00ff00"/>
<rect x="524" y="351" width="3" height="5" fill="#00ff00"/>
<rect x="525" y="352" width="1" height="3" fill="#fff"/>
<rect x="529" y="343" width="1" height="15" fill="#00ff00"/>
<rect x="528" y="344" width="3" height="14" fill="#00ff00"/>
<rect x="529" y="345" width="1" height="12" fill="#000"/>
<rect x="533" y="345" width="1" height="6" fill="#00ff00"/>
<rect x="532" y="345" width="3" height="6" fill="#00ff00"/>
<rect x="533" y="346" width="1" height="4" fill="#fff"/>
<polygon points="187,70 192.3,70 192.3,83.3 199.4,77 199.4,84 189.6,93.3 179.7,84 179.7,77 187,83.5" fill="#ffff00" style="shape-rendering:auto"/>
<polygon points="184.7,97.5 186.6,102.0 191.5,102.5 187.8,105.7 188.9,110.5 184.7,108.0 180.5,110.5 181.6,105.7 177.9,102.5 182.8,102.0" fill="#ffff00" style="shape-rendering:auto"/>
<rect x="680" y="58" width="2" height="1" fill="#fff"/>
<rect x="680" y="93" width="2" height="1" fill="#fff"/>
<rect x="680" y="128" width="2" height="1" fill="#fff"/>
<rect x="680" y="163" width="2" height="1" fill="#fff"/>
<rect x="680" y="198" width="2" height="1" fill="#fff"/>
<rect x="680" y="233" width="2" height="1" fill="#fff"/>
<rect x="680" y="268" width="2" height="1" fill="#fff"/>
<rect x="680" y="303" width="2" height="1" fill="#fff"/>
<rect x="680" y="338" width="2" height="1" fill="#fff"/>
<rect x="680" y="373" width="2" height="1" fill="#fff"/>
<rect x="680" y="382" width="1" height="1" fill="#fff"/>
<rect x="680" y="475" width="1" height="1" fill="#fff"/>
<rect x="680" y="552" width="1" height="1" fill="#fff"/>
<rect x="13" y="554" width="1" height="3" fill="#fff"/>
<rect x="77" y="554" width="1" height="3" fill="#fff"/>
<rect x="141" y="554" width="1" height="3" fill="#fff"/>
<rect x="205" y="554" width="1" height="3" fill="#fff"/>
<rect x="269" y="554" width="1" height="3" fill="#fff"/>
<rect x="333" y="554" width="1" height="3" fill="#fff"/>
<rect x="397" y="554" width="1" height="3" fill="#fff"/>
<rect x="461" y="554" width="1" height="3" fill="#fff"/>
<rect x="525" y="554" width="1" height="3" fill="#fff"/>
<polyline points="13.5,464.2 17.5,457.7 21.5,445.5 25.5,432.1 29.5,442.2 33.5,451.2 37.5,475.0 41.5,441.7 45.5,460.0 49.5,476.5 53.5,496.2 57.5,456.6 61.5,466.8 65.5,494.6 69.5,515.7 73.5,532.0 77.5,540.2 81.5,543.4 85.5,545.0 89.5,542.6 93.5,536.1 97.5,505.2 101.5,469.0 105.5,426.0 109.5,410.5 113.5,413.7 117.5,413.7 121.5,413.9 125.5,419.0 129.5,429.0 133.5,463.5 137.5,507.6 141.5,479.8 145.5,450.4 149.5,439.8 153.5,466.8 157.5,491.3 161.5,512.5 165.5,528.0 169.5,539.9 173.5,538.3 177.5,509.2 181.5,476.5 185.5,437.0 189.5,441.9 193.5,442.2 197.5,458.5 201.5,494.6 205.5,528.8 209.5,536.9 213.5,536.9 217.5,537.7 221.5,536.1 225.5,533.7 229.5,534.5 233.5,541.8 237.5,507.5 241.5,491.2 245.5,457.2 249.5,445.8 253.5,433.8 257.5,439.3 261.5,429.5 265.5,450.4 269.5,473.3 273.5,481.0 277.5,495.4 281.5,497.0 285.5,527.1 289.5,545.9 293.5,546.7 297.5,546.7 301.5,547.5 305.5,550.0 309.5,549.6 313.5,545.9 317.5,541.8 321.5,540.5 325.5,524.7 329.5,522.3 333.5,501.9 337.5,498.6 341.5,484.0 345.5,510.0 349.5,520.2 353.5,530.4 357.5,540.2 361.5,541.8 365.5,546.4 369.5,541.8 373.5,532.0 377.5,500.0 381.5,466.0 385.5,423.5 389.5,406.7 393.5,402.2 397.5,405.6 401.5,421.9 405.5,432.0 409.5,432.1 413.5,455.3 417.5,479.8 421.5,497.0 425.5,492.1 429.5,485.6 433.5,494.6 437.5,527.1 441.5,534.5 445.5,488.0 449.5,464.0 453.5,441.4 457.5,429.5 461.5,417.8 465.5,410.5 469.5,410.5 473.5,435.7 477.5,482.0 481.5,501.0 485.5,517.4 489.5,527.1 493.5,526.3 497.5,510.0 501.5,495.4 505.5,494.9 509.5,497.0 513.5,520.6 517.5,537.7 521.5,551.2 525.5,551.2 529.5,546.7 533.5,541.5" fill="none" stroke="#ff0000" stroke-width="2" stroke-linejoin="round" clip-path="url(#c1)"/>
<polyline points="13.5,460.0 17.5,449.6 21.5,434.9 25.5,420.2 29.5,416.7 33.5,417.5 37.5,419.8 41.5,423.0 45.5,427.2 49.5,431.2 53.5,433.0 57.5,433.3 61.5,441.4 65.5,452.0 69.5,465.0 73.5,483.0 77.5,485.8 81.5,492.1 85.5,493.8 89.5,503.5 93.5,510.9 97.5,518.2 101.5,523.1 105.5,515.7 109.5,500.3 113.5,489.7 117.5,481.5 121.5,472.5 125.5,463.5 129.5,456.6 133.5,460.1 137.5,455.3 141.5,447.1 145.5,439.8 149.5,434.6 153.5,447.1 157.5,456.1 161.5,462.6 165.5,471.5 169.5,479.7 173.5,485.5 177.5,493.8 181.5,503.5 185.5,509.2 189.5,514.1 193.5,520.3 197.5,526.3 201.5,530.4 205.5,533.3 209.5,534.5 213.5,535.6 217.5,537.2 221.5,537.7 225.5,537.7 229.5,538.2 233.5,538.4 237.5,535.3 241.5,532.0 245.5,528.8 249.5,526.8 253.5,522.6 257.5,519.0 261.5,510.9 265.5,506.3 269.5,514.1 273.5,519.0 277.5,513.8 281.5,513.0 285.5,513.0 289.5,513.0 293.5,513.0 297.5,513.0 301.5,519.8 305.5,522.0 309.5,522.3 313.5,523.9 317.5,528.0 321.5,532.8 325.5,537.2 329.5,541.8 333.5,544.7 337.5,545.9 341.5,545.5 345.5,545.9 349.5,547.0 353.5,547.8 357.5,547.8 361.5,547.8 365.5,547.8 369.5,547.8 373.5,547.5 377.5,545.9 381.5,545.4 385.5,542.6 389.5,538.5 393.5,534.5 397.5,530.7 401.5,528.0 405.5,523.1 409.5,514.1 413.5,509.2 417.5,501.1 421.5,494.6 425.5,488.5 429.5,483.0 433.5,478.2 437.5,473.0 441.5,466.8 445.5,449.6 449.5,438.2 453.5,431.8 457.5,433.8 461.5,433.8 465.5,433.8 469.5,433.8 473.5,438.6 477.5,452.8 481.5,468.5 485.5,481.4 489.5,482.5 493.5,477.6 497.5,476.4 501.5,476.7 505.5,489.5 509.5,497.0 513.5,503.5 517.5,510.0 521.5,512.5 525.5,519.0 529.5,524.7 533.5,529.1" fill="none" stroke="#00ffff" stroke-width="2" stroke-linejoin="round" clip-path="url(#c1)"/>
<polyline points="13.5,539.8 17.5,539.4 21.5,536.6 25.5,534.5 29.5,532.8 33.5,530.4 37.5,528.0 41.5,525.5 45.5,522.6 49.5,519.8 53.5,518.2 57.5,514.4 61.5,511.7 65.5,508.4 69.5,506.0 73.5,505.6 77.5,505.6 81.5,504.7 85.5,504.0 89.5,503.5 93.5,502.7 97.5,500.8 101.5,498.2 105.5,491.3 109.5,483.5 113.5,476.7 117.5,470.1 121.5,462.3 125.5,452.0 129.5,446.0 133.5,446.0 137.5,446.0 141.5,446.0 145.5,444.7 149.5,443.9 153.5,455.3 157.5,462.6 161.5,469.1 165.5,474.8 169.5,480.2 173.5,486.3 177.5,491.3 181.5,493.8 185.5,495.9 189.5,497.8 193.5,501.9 197.5,506.0 201.5,509.2 205.5,512.5 209.5,515.7 213.5,516.6 217.5,519.3 221.5,521.4 225.5,523.6 229.5,525.5 233.5,527.5 237.5,528.8 241.5,530.7 245.5,531.7 249.5,532.5 253.5,533.3 257.5,533.7 261.5,533.7 265.5,533.7 269.5,534.0 273.5,535.3 277.5,536.6 281.5,537.7 285.5,538.9 289.5,539.9 293.5,541.0 297.5,541.8 301.5,542.6 305.5,543.0 309.5,543.1 313.5,543.2 317.5,543.4 321.5,543.5 325.5,543.6 329.5,543.7 333.5,543.8 337.5,543.8 341.5,543.8 345.5,543.8 349.5,543.8 353.5,543.8 357.5,543.8 361.5,543.8 365.5,543.8 369.5,544.2 373.5,546.7 377.5,546.7 381.5,546.4 385.5,546.4 389.5,545.9 393.5,545.4 397.5,545.0 401.5,544.7 405.5,544.2 409.5,543.4 413.5,542.6 417.5,542.1 421.5,541.8 425.5,541.5 429.5,541.0 433.5,540.7 437.5,540.5 441.5,539.8 445.5,537.7 449.5,535.6 453.5,534.0 457.5,531.6 461.5,528.0 465.5,523.1 469.5,519.0 473.5,516.1 477.5,514.9 481.5,514.1 485.5,511.7 489.5,508.4 493.5,506.0 497.5,503.5 501.5,501.4 505.5,500.3 509.5,499.8 513.5,499.9 517.5,500.3 521.5,500.3 525.5,500.3 529.5,501.1 533.5,501.1" fill="none" stroke="#ffff00" stroke-width="2" stroke-linejoin="round" clip-path="url(#c1)"/>
<rect x="16" y="42" width="7" height="1" fill="#fff"/>
<rect x="17" y="43" width="5" height="1" fill="#fff"/>
<rect x="18" y="44" width="3" height="1" fill="#fff"/>
<rect x="19" y="45" width="1" height="1" fill="#fff"/>
<text x="28.7" y="47" fill="#fff" stroke="#fff" stroke-width="0.18" font-size="9.8" textLength="56" lengthAdjust="spacingAndGlyphs">AUDUSD,M5</text>
<text x="91.3" y="47" fill="#fff" stroke="#fff" stroke-width="0.18" font-size="9.8" textLength="32.2" lengthAdjust="spacingAndGlyphs">0.66917</text>
<text x="127.3" y="47" fill="#fff" stroke="#fff" stroke-width="0.18" font-size="9.8" textLength="32.2" lengthAdjust="spacingAndGlyphs">0.66917</text>
<text x="163.3" y="47" fill="#fff" stroke="#fff" stroke-width="0.18" font-size="9.8" textLength="32.2" lengthAdjust="spacingAndGlyphs">0.66912</text>
<text x="199.3" y="47" fill="#fff" stroke="#fff" stroke-width="0.18" font-size="9.8" textLength="32.2" lengthAdjust="spacingAndGlyphs">0.66912</text>
<text x="685.5" y="62" fill="#fff" stroke="#fff" stroke-width="0.18" font-size="9.8" textLength="32.4" lengthAdjust="spacingAndGlyphs">0.67245</text>
<text x="685.5" y="97" fill="#fff" stroke="#fff" stroke-width="0.18" font-size="9.8" textLength="32.4" lengthAdjust="spacingAndGlyphs">0.67205</text>
<text x="685.5" y="132" fill="#fff" stroke="#fff" stroke-width="0.18" font-size="9.8" textLength="32.4" lengthAdjust="spacingAndGlyphs">0.67165</text>
<text x="685.5" y="167" fill="#fff" stroke="#fff" stroke-width="0.18" font-size="9.8" textLength="32.4" lengthAdjust="spacingAndGlyphs">0.67125</text>
<text x="685.5" y="202" fill="#fff" stroke="#fff" stroke-width="0.18" font-size="9.8" textLength="32.4" lengthAdjust="spacingAndGlyphs">0.67085</text>
<text x="685.5" y="237" fill="#fff" stroke="#fff" stroke-width="0.18" font-size="9.8" textLength="32.4" lengthAdjust="spacingAndGlyphs">0.67045</text>
<text x="685.5" y="272" fill="#fff" stroke="#fff" stroke-width="0.18" font-size="9.8" textLength="32.4" lengthAdjust="spacingAndGlyphs">0.67005</text>
<text x="685.5" y="307" fill="#fff" stroke="#fff" stroke-width="0.18" font-size="9.8" textLength="32.4" lengthAdjust="spacingAndGlyphs">0.66965</text>
<text x="685.5" y="342" fill="#fff" stroke="#fff" stroke-width="0.18" font-size="9.8" textLength="32.4" lengthAdjust="spacingAndGlyphs">0.66925</text>
<text x="685.5" y="377" fill="#fff" stroke="#fff" stroke-width="0.18" font-size="9.8" textLength="32.4" lengthAdjust="spacingAndGlyphs">0.66885</text>
<rect x="681" y="345" width="41" height="11" fill="#fff"/>
<text x="685.5" y="354" fill="#000" stroke="#000" stroke-width="0.18" font-size="9.8" textLength="32.4" lengthAdjust="spacingAndGlyphs">0.66912</text>
<text x="683.2" y="391" fill="#fff" stroke="#fff" stroke-width="0.18" font-size="9.8" textLength="15" lengthAdjust="spacingAndGlyphs">120</text>
<text x="682.6" y="401" fill="#fff" stroke="#fff" stroke-width="0.18" font-size="9.8" textLength="15" lengthAdjust="spacingAndGlyphs">100</text>
<text x="682.3" y="417" fill="#fff" stroke="#fff" stroke-width="0.18" font-size="9.8" textLength="10" lengthAdjust="spacingAndGlyphs">80</text>
<text x="682.3" y="440" fill="#fff" stroke="#fff" stroke-width="0.18" font-size="9.8" textLength="10" lengthAdjust="spacingAndGlyphs">50</text>
<text x="683.4" y="479" fill="#fff" stroke="#fff" stroke-width="0.18" font-size="9.8" textLength="18" lengthAdjust="spacingAndGlyphs">0.00</text>
<text x="682.6" y="518" fill="#fff" stroke="#fff" stroke-width="0.18" font-size="9.8" textLength="12.8" lengthAdjust="spacingAndGlyphs">-50</text>
<text x="682.6" y="541" fill="#fff" stroke="#fff" stroke-width="0.18" font-size="9.8" textLength="12.8" lengthAdjust="spacingAndGlyphs">-80</text>
<text x="683.2" y="550" fill="#fff" stroke="#fff" stroke-width="0.18" font-size="9.8" textLength="17.6" lengthAdjust="spacingAndGlyphs">-100</text>
<text x="17.4" y="393" fill="#fff" stroke="#fff" stroke-width="0.18" font-size="9.8" textLength="40.6" lengthAdjust="spacingAndGlyphs">R(9,26,52)</text>
<text x="63.4" y="393" fill="#fff" stroke="#fff" stroke-width="0.18" font-size="9.8" textLength="19.8" lengthAdjust="spacingAndGlyphs">-85.8</text>
<text x="87.6" y="393" fill="#fff" stroke="#fff" stroke-width="0.18" font-size="9.8" textLength="19.9" lengthAdjust="spacingAndGlyphs">-69.7</text>
<text x="112" y="393" fill="#fff" stroke="#fff" stroke-width="0.18" font-size="9.8" textLength="19.7" lengthAdjust="spacingAndGlyphs">-33.8</text>
<text x="12" y="566" fill="#fff" stroke="#fff" stroke-width="0.18" font-size="9.8" textLength="45" lengthAdjust="spacingAndGlyphs">8 Jan 2026</text>
<text x="76" y="566" fill="#fff" stroke="#fff" stroke-width="0.18" font-size="9.8" textLength="48" lengthAdjust="spacingAndGlyphs">8 Jan 02:25</text>
<text x="140" y="566" fill="#fff" stroke="#fff" stroke-width="0.18" font-size="9.8" textLength="48" lengthAdjust="spacingAndGlyphs">8 Jan 03:45</text>
<text x="204" y="566" fill="#fff" stroke="#fff" stroke-width="0.18" font-size="9.8" textLength="48" lengthAdjust="spacingAndGlyphs">8 Jan 05:05</text>
<text x="268" y="566" fill="#fff" stroke="#fff" stroke-width="0.18" font-size="9.8" textLength="48" lengthAdjust="spacingAndGlyphs">8 Jan 06:25</text>
<text x="332" y="566" fill="#fff" stroke="#fff" stroke-width="0.18" font-size="9.8" textLength="48" lengthAdjust="spacingAndGlyphs">8 Jan 07:45</text>
<text x="396" y="566" fill="#fff" stroke="#fff" stroke-width="0.18" font-size="9.8" textLength="48" lengthAdjust="spacingAndGlyphs">8 Jan 09:05</text>
<text x="460" y="566" fill="#fff" stroke="#fff" stroke-width="0.18" font-size="9.8" textLength="48" lengthAdjust="spacingAndGlyphs">8 Jan 10:25</text>
<text x="524" y="566" fill="#fff" stroke="#fff" stroke-width="0.18" font-size="9.8" textLength="48" lengthAdjust="spacingAndGlyphs">8 Jan 11:45</text>
</svg>
</body></html>
